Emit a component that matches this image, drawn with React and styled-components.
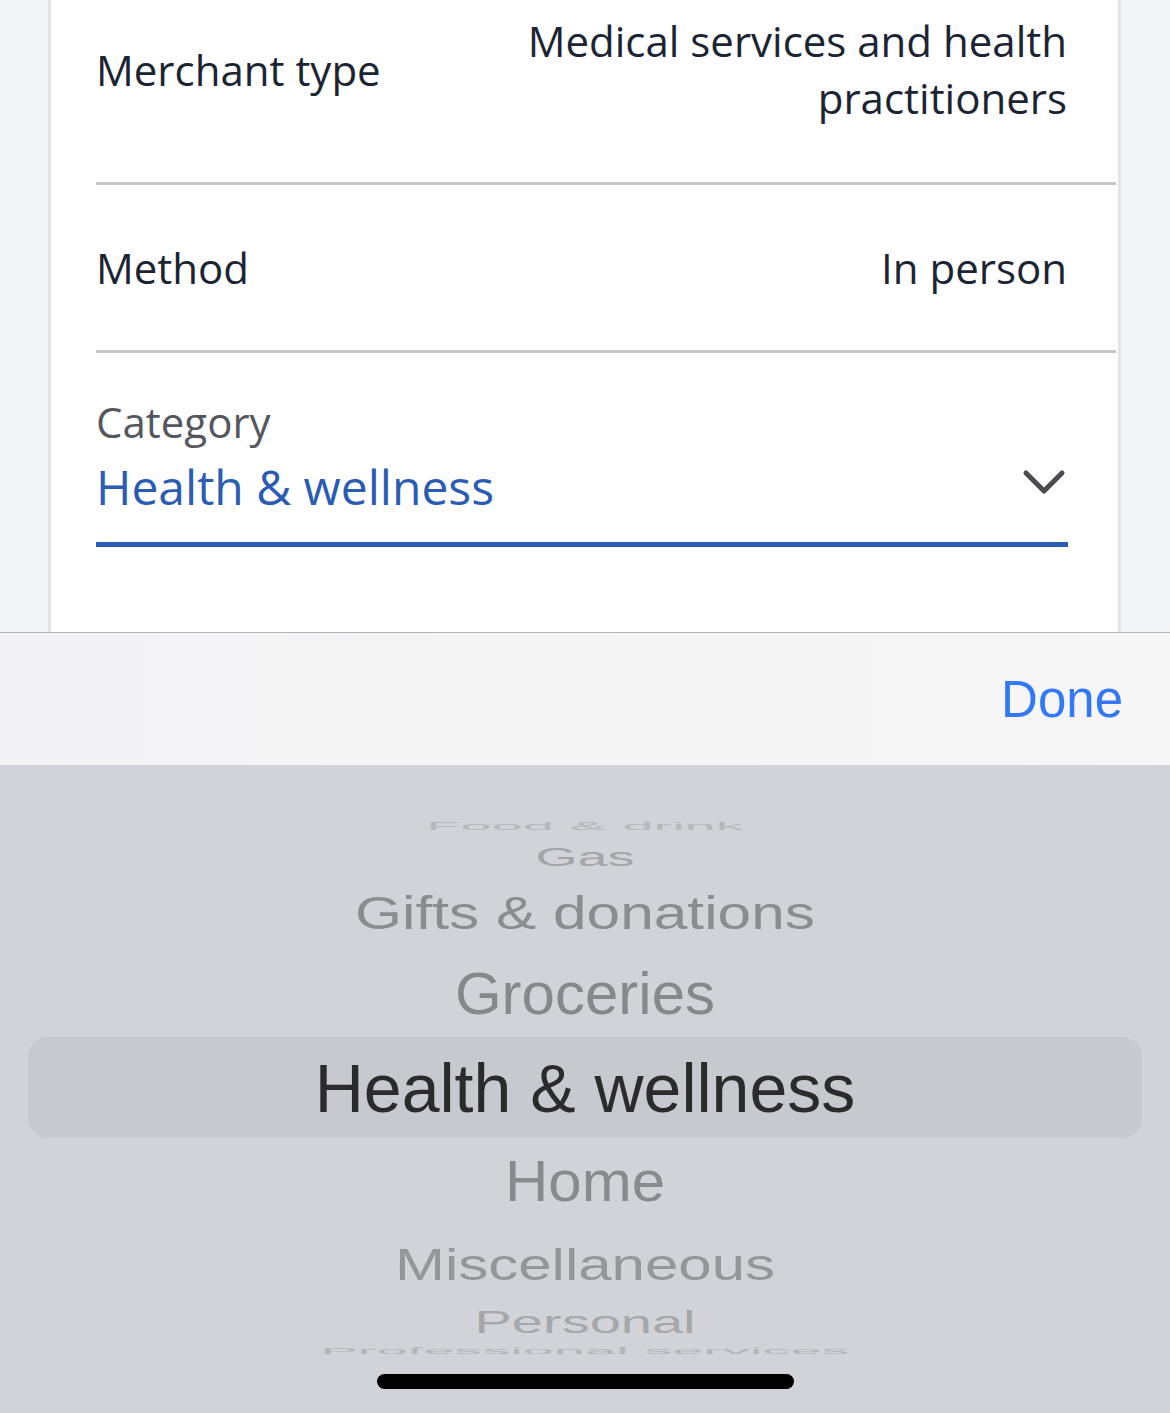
import React from 'react'
import styled, { createGlobalStyle } from 'styled-components'

const GlobalStyle = createGlobalStyle`
  html, body {
    margin: 0;
    padding: 0;
    background: #d1d3d8;
    overflow: hidden;
  }
  * {
    box-sizing: border-box;
  }
`

const Page = styled.div`
  width: 1170px;
  height: 1413px;
  display: flex;
  flex-direction: column;
  overflow: hidden;
`

const Screen = styled.div`
  height: 632px;
  flex-shrink: 0;
  background: #f4f5f7;
  padding: 0 49px 0 48px;
  overflow: hidden;
`

const Card = styled.div`
  height: 100%;
  background: #fff;
  border-left: 3px solid #e3e4e7;
  border-right: 3px solid #e3e4e7;
  padding-left: 45px;
  font-family: 'Open Sans', 'Noto Sans', sans-serif;
`

const Row = styled.div`
  display: flex;
  justify-content: space-between;
  align-items: center;
  gap: 40px;
  padding: ${({ $top }) => $top ?? 54}px 49px ${({ $bottom }) => $bottom ?? 54}px 0;
  margin-right: 2px;
  border-bottom: 3px solid #c6c6c6;
  font-size: 42px;
  line-height: 57px;
  color: #1c2433;
`

const Label = styled.div`
  flex-shrink: 0;
`

const Value = styled.div`
  max-width: 600px;
  text-align: right;
`

const Field = styled.div`
  margin-right: 50px;
  padding-top: 40px;
  padding-bottom: 23px;
  border-bottom: 5px solid #2a5cb3;
`

const FieldLabel = styled.div`
  font-size: 42px;
  line-height: 57px;
  color: #54585e;
`

const SelectLine = styled.div`
  display: flex;
  justify-content: space-between;
  align-items: flex-start;
  margin-top: 5px;
`

const Selected = styled.div`
  font-size: 48px;
  line-height: 64px;
  color: #2a5cb3;
`

const Chevron = styled.svg`
  margin-top: 14px;
  margin-right: 2px;
`

const Toolbar = styled.div`
  height: 133px;
  flex-shrink: 0;
  border-top: 1px solid #b3b3b5;
  background: linear-gradient(90deg, #f3f3f5 0%, #f5f5f6 50%, #f6f6f6 100%);
  display: flex;
  align-items: center;
  justify-content: flex-end;
  padding-right: 47px;
`

const DoneButton = styled.button`
  border: none;
  background: none;
  padding: 0;
  font-family: 'Liberation Sans', Arial, sans-serif;
  font-size: 51px;
  line-height: 1;
  color: #3478f6;
`

const Picker = styled.div`
  flex: 1;
  background: #d1d3d8;
  padding-top: 47px;
  display: flex;
  flex-direction: column;
  align-items: stretch;
  font-family: 'Liberation Sans', Arial, sans-serif;
`

const Item = styled.div`
  height: ${({ $h }) => $h}px;
  display: flex;
  align-items: center;
  justify-content: center;
  ${({ $active }) =>
    $active &&
    `
    margin: 5px 28px 0;
    border-radius: 20px;
    background: #c8c9ce;
  `}
`

const ItemText = styled.span`
  display: inline-block;
  white-space: nowrap;
  font-size: ${({ $size }) => $size}px;
  line-height: 1;
  color: ${({ $color }) => $color};
  transform: scaleY(${({ $sy }) => $sy});
`

const HomeIndicator = styled.div`
  width: 417px;
  height: 15px;
  margin: 13px auto 0;
  border-radius: 8px;
  background: #000;
`

const items = [
  { label: 'Food & drink', h: 30, size: 56, sy: 0.18, color: '#b7b8bc' },
  { label: 'Gas', h: 29, size: 54, sy: 0.47, color: '#a4a5a9' },
  { label: 'Gifts & donations', h: 85, size: 60.4, sy: 0.77, color: '#8b8c90' },
  { label: 'Groceries', h: 76, size: 60, sy: 0.98, color: '#87888c' },
  { label: 'Health & wellness', h: 101, size: 68, sy: 1.02, color: '#2b2b2d', active: true },
  { label: 'Home', h: 88, size: 60, sy: 0.95, color: '#898a8e' },
  { label: 'Miscellaneous', h: 78, size: 60, sy: 0.75, color: '#95969a' },
  { label: 'Personal', h: 37, size: 56, sy: 0.55, color: '#a6a7ab' },
  { label: 'Professional services', h: 20, size: 56, sy: 0.15, color: '#b4b5b9' },
]

const App = () => (
  <Page>
    <GlobalStyle />
    <Screen>
      <Card>
        <Row $top={12} $bottom={56}>
          <Label>Merchant type</Label>
          <Value>Medical services and health practitioners</Value>
        </Row>
        <Row>
          <Label>Method</Label>
          <Value>In person</Value>
        </Row>
        <Field>
          <FieldLabel>Category</FieldLabel>
          <SelectLine>
            <Selected>Health &amp; wellness</Selected>
            <Chevron width="44" height="28" viewBox="0 0 44 28">
              <path
                d="M4 4 L22 22 L40 4"
                fill="none"
                stroke="#4a4c50"
                strokeWidth="5"
                strokeLinecap="round"
                strokeLinejoin="round"
              />
            </Chevron>
          </SelectLine>
        </Field>
      </Card>
    </Screen>
    <Toolbar>
      <DoneButton>Done</DoneButton>
    </Toolbar>
    <Picker>
      {items.map((item) => (
        <Item key={item.label} $h={item.h} $active={item.active}>
          <ItemText $size={item.size} $sy={item.sy} $color={item.color}>
            {item.label}
          </ItemText>
        </Item>
      ))}
      <HomeIndicator />
    </Picker>
  </Page>
)

export default App
